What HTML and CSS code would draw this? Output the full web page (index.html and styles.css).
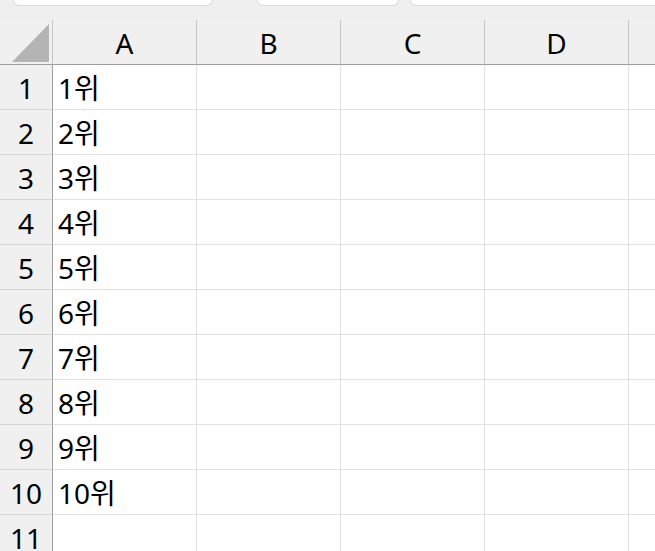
FILE: index.html
```html
<!DOCTYPE html>
<html lang="ko">
<head>
<meta charset="utf-8">
<link rel="stylesheet" href="styles.css">
</head>
<body>
<div class="topbar">
  <div class="tab tab1"></div>
  <div class="tab tab2"></div>
  <div class="tab tab3"></div>
</div>
<div class="sheet">
  <div class="corner hdr">
    <svg class="tri" width="37" height="38" viewBox="0 0 37 38"><polygon points="0,38 37,0 37,38" fill="#b4b4b4"/></svg>
  </div>
  <div class="colhdr hdr">A</div>
  <div class="colhdr hdr">B</div>
  <div class="colhdr hdr">C</div>
  <div class="colhdr hdr">D</div>
  <div class="colhdr hdr last"></div>

  <div class="rowhdr">1</div><div class="cell">1위</div><div class="cell"></div><div class="cell"></div><div class="cell"></div><div class="cell last"></div>
  <div class="rowhdr">2</div><div class="cell">2위</div><div class="cell"></div><div class="cell"></div><div class="cell"></div><div class="cell last"></div>
  <div class="rowhdr">3</div><div class="cell">3위</div><div class="cell"></div><div class="cell"></div><div class="cell"></div><div class="cell last"></div>
  <div class="rowhdr">4</div><div class="cell">4위</div><div class="cell"></div><div class="cell"></div><div class="cell"></div><div class="cell last"></div>
  <div class="rowhdr">5</div><div class="cell">5위</div><div class="cell"></div><div class="cell"></div><div class="cell"></div><div class="cell last"></div>
  <div class="rowhdr">6</div><div class="cell">6위</div><div class="cell"></div><div class="cell"></div><div class="cell"></div><div class="cell last"></div>
  <div class="rowhdr">7</div><div class="cell">7위</div><div class="cell"></div><div class="cell"></div><div class="cell"></div><div class="cell last"></div>
  <div class="rowhdr">8</div><div class="cell">8위</div><div class="cell"></div><div class="cell"></div><div class="cell"></div><div class="cell last"></div>
  <div class="rowhdr">9</div><div class="cell">9위</div><div class="cell"></div><div class="cell"></div><div class="cell"></div><div class="cell last"></div>
  <div class="rowhdr">10</div><div class="cell">10위</div><div class="cell"></div><div class="cell"></div><div class="cell"></div><div class="cell last"></div>
  <div class="rowhdr">11</div><div class="cell"></div><div class="cell"></div><div class="cell"></div><div class="cell"></div><div class="cell last"></div>
</div>
</body>
</html>
```
FILE: styles.css
```css
html, body {
  margin: 0;
  padding: 0;
  width: 655px;
  height: 551px;
  overflow: hidden;
  background: #ffffff;
  font-family: "Noto Sans", "Noto Sans CJK KR", sans-serif;
  color: #000;
}
.topbar {
  height: 20px;
  background: #efefef;
  display: flex;
  align-items: flex-start;
  overflow: hidden;
}
.tab {
  height: 5px;
  background: #ffffff;
  border: 1px solid #d9d9d9;
  border-top: none;
  border-radius: 0 0 8px 8px;
  flex: none;
}
.tab1 { margin-left: 13px; width: 198px; }
.tab2 { margin-left: 44px; width: 140px; }
.tab3 { margin-left: 11px; width: 300px; }

.sheet {
  display: grid;
  grid-template-columns: 53px 144px 144px 144px 144px 1fr;
  grid-template-rows: 45px repeat(11, 45px);
}
.hdr {
  background: #f0f0f0;
  border-bottom: 1px solid #9e9e9e;
  box-sizing: border-box;
}
.corner {
  border-right: 1px solid #c6c6c6;
  position: relative;
}
.tri {
  position: absolute;
  left: 12px;
  top: 4px;
}
.colhdr {
  border-right: 1px solid #c6c6c6;
  font-size: 28px;
  display: flex;
  align-items: center;
  justify-content: center;
  line-height: 1;
  padding-top: 2px;
}
.colhdr.last { border-right: none; }
.rowhdr {
  background: #f0f0f0;
  border-right: 1px solid #9e9e9e;
  border-bottom: 1px solid #d4d4d4;
  box-sizing: border-box;
  font-size: 28px;
  display: flex;
  align-items: center;
  justify-content: center;
  line-height: 1;
  padding-top: 2px;
}
.cell {
  border-right: 1px solid #e1e1e1;
  border-bottom: 1px solid #e1e1e1;
  box-sizing: border-box;
  font-size: 28px;
  display: flex;
  align-items: center;
  padding-left: 5px;
  padding-top: 2px;
  line-height: 1;
}
.cell.last { border-right: none; }
```
